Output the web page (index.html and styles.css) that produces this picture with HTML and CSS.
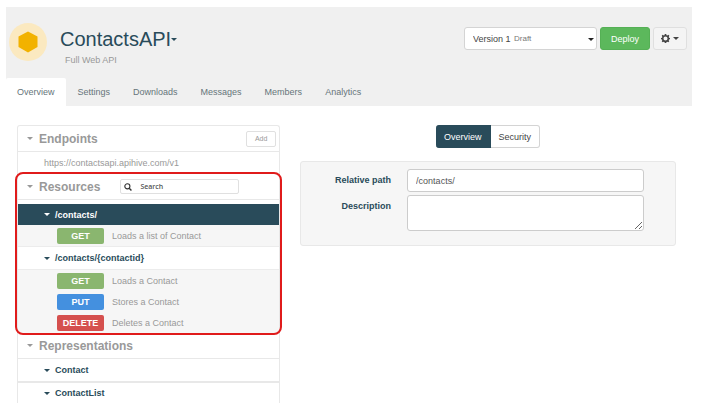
FILE: index.html
```html
<!DOCTYPE html>
<html lang="en">
<head>
<meta charset="utf-8">
<title>ContactsAPI</title>
<link rel="stylesheet" href="styles.css">
</head>
<body>
<header class="header">
  <div class="header-top">
    <svg class="logo" viewBox="0 0 38 38" aria-hidden="true">
      <circle cx="19" cy="19" r="19" fill="#fbe9c0"/>
      <path d="M19 8.500 28.500 13.500V24L19 29.500 9.500 24V13.500Z" fill="#f2b200"/>
    </svg>
    <div class="heading">
      <h1 class="title">ContactsAPI<span class="caret"></span></h1>
      <p class="subtitle">Full Web API</p>
    </div>
    <div class="actions">
      <div class="version">
        <select class="version-select" aria-label="Version"><option>Version 1</option></select>
        <span class="version-state">Draft</span>
        <span class="caret version-caret"></span>
      </div>
      <button class="btn btn-deploy" type="button">Deploy</button>
      <button class="btn btn-gear" type="button" aria-label="Options">
        <svg class="gear" viewBox="0 0 16 16" aria-hidden="true">
          <path fill="currentColor" fill-rule="evenodd" d="M6.700 0h2.600l.5 2.100 1.400.6L13.100 1.500l1.700 1.800-1 1.900.5 1.300 1.700.4v2.400l-1.800.5-.5 1.300 1 1.900-1.700 1.700-1.900-1-1.300.5L9.300 16H6.700l-.5-1.800-1.300-.5-1.900 1L1.300 13l1-1.900-.5-1.300L0 9.300V6.900l1.800-.4.5-1.300-1-1.900L3 1.500l1.900 1.200 1.300-.6ZM8 4.400A3.600 3.600 0 1 0 8 11.600 3.600 3.600 0 0 0 8 4.400Z"/>
        </svg>
        <span class="caret"></span>
      </button>
    </div>
  </div>
  <nav class="tabs">
    <a class="tab tab-active" href="#overview">Overview</a>
    <a class="tab" href="#settings">Settings</a>
    <a class="tab" href="#downloads">Downloads</a>
    <a class="tab" href="#messages">Messages</a>
    <a class="tab" href="#members">Members</a>
    <a class="tab" href="#analytics">Analytics</a>
  </nav>
</header>

<main class="content">
  <aside class="sidebar">
    <section>
      <div class="section-head">
        <span class="caret"></span>
        <h2 class="section-title">Endpoints</h2>
        <button class="btn-add" type="button">Add</button>
      </div>
      <p class="endpoint">https://contactsapi.apihive.com/v1</p>
    </section>
    <section class="resources">
      <div class="section-head">
        <span class="caret"></span>
        <h2 class="section-title">Resources</h2>
        <label class="search">
          <svg class="search-icon" viewBox="0 0 10 10" aria-hidden="true">
            <circle cx="4.200" cy="4.200" r="3.200" fill="none" stroke="#333" stroke-width="1.400"/>
            <path d="M6.500 6.500 9.300 9.300" stroke="#333" stroke-width="1.800"/>
          </svg>
          <input class="search-input" type="search" placeholder="Search" aria-label="Search resources">
        </label>
      </div>
      <a class="path path-active" href="#contacts"><span class="caret"></span>/contacts/</a>
      <div class="methods">
        <a class="method" href="#list"><span class="badge badge-get">GET</span>Loads a list of Contact</a>
      </div>
      <a class="path" href="#contact"><span class="caret"></span>/contacts/{contactid}</a>
      <div class="methods">
        <a class="method" href="#get"><span class="badge badge-get">GET</span>Loads a Contact</a>
        <a class="method" href="#put"><span class="badge badge-put">PUT</span>Stores a Contact</a>
        <a class="method" href="#delete"><span class="badge badge-delete">DELETE</span>Deletes a Contact</a>
      </div>
    </section>
    <section>
      <div class="section-head">
        <span class="caret"></span>
        <h2 class="section-title">Representations</h2>
      </div>
      <a class="path" href="#rep-contact"><span class="caret"></span>Contact</a>
      <a class="path path-ruled" href="#rep-list"><span class="caret"></span>ContactList</a>
    </section>
  </aside>

  <section class="detail">
    <div class="switch">
      <button class="switch-btn switch-on" type="button">Overview</button>
      <button class="switch-btn" type="button">Security</button>
    </div>
    <form class="panel">
      <label class="label" for="path">Relative path</label>
      <input class="field" id="path" type="text" value="/contacts/">
      <label class="label" for="description">Description</label>
      <textarea class="field field-area" id="description"></textarea>
    </form>
  </section>
</main>
</body>
</html>
```
FILE: styles.css
```css
* {
  box-sizing: border-box;
}

body {
  margin: 7px 11px 0 6px;
  background: #fff;
  color: #294b5a;
  font: 9px/12px "Liberation Sans", Arial, sans-serif;
}

h1, h2, p {
  margin: 0;
}

a {
  color: inherit;
  text-decoration: none;
}

button, input, select, textarea {
  font: inherit;
}

.caret {
  flex: none;
  display: inline-block;
  border: solid transparent;
  border-width: 3px 3px 0;
  border-top-color: currentColor;
}

/* Header */
.header {
  background: #f0f0f0;
}

.header-top {
  display: flex;
  align-items: flex-start;
  height: 71px;
  padding: 16px 5px 0 3px;
}

.logo {
  width: 38px;
  height: 38px;
}

.heading {
  flex: 1;
  padding-left: 13px;
}

.title {
  display: flex;
  align-items: center;
  font-size: 20px;
  font-weight: 400;
  line-height: 32px;
}

.subtitle {
  padding-left: 5px;
  color: #999;
  line-height: 10px;
}

.actions {
  display: flex;
  gap: 3px;
  padding-top: 4px;
}

.version {
  position: relative;
  width: 133px;
}

.version-select {
  appearance: none;
  width: 100%;
  height: 23px;
  padding: 0 8px;
  border: 1px solid #d4d4d4;
  border-radius: 3px;
  background: #fff;
  color: #444;
}

.version-state {
  position: absolute;
  top: 6px;
  left: 50px;
  color: #777;
  font-size: 8px;
  pointer-events: none;
}

.version-caret {
  position: absolute;
  top: 11px;
  right: 3px;
  color: #222;
  pointer-events: none;
}

.btn {
  height: 23px;
  padding: 0;
  border: 1px solid;
  border-radius: 3px;
}

.btn-deploy {
  width: 50px;
  border-color: #55b055;
  background: #5cb85c;
  color: #fff;
}

.btn-gear {
  display: flex;
  align-items: center;
  justify-content: center;
  gap: 3px;
  width: 34px;
  border-color: #dfdfdf;
  background: #f4f4f4;
  color: #444;
}

.gear {
  width: 9px;
  height: 9px;
}

.tabs {
  display: flex;
  gap: 1px;
}

.tab {
  padding: 8px 11px;
  color: #66757a;
}

.tab-active {
  border-radius: 2px 2px 0 0;
  background: #fff;
}

/* Page body */
.content {
  display: grid;
  grid-template-columns: 7fr 10fr;
  gap: 20px;
  padding: 19px 16px 0 11px;
}

.sidebar {
  border: 1px solid #e8e8e8;
  border-bottom: 0;
  border-radius: 3px 3px 0 0;
}

.section-head {
  display: flex;
  align-items: center;
  height: 26px;
  padding: 0 3px 0 9px;
  border-bottom: 1px solid #e8e8e8;
  color: #999;
}

.section-title {
  margin-left: 6px;
  font-size: 12px;
  line-height: 14px;
}

.btn-add {
  width: 30px;
  height: 16px;
  margin-left: auto;
  padding: 0;
  border: 1px solid #e0e0e0;
  border-radius: 2px;
  background: #fff;
  color: #999;
  font-size: 7px;
}

.endpoint {
  padding: 5px 26px;
  color: #999;
}

.resources {
  position: relative;
}

/* Highlight frame drawn around the whole section */
.resources::after {
  content: "";
  position: absolute;
  inset: -2px -3px;
  border: 2px solid #e01b1b;
  border-radius: 8px;
  pointer-events: none;
}

.resources .section-head {
  margin-bottom: 4px;
}

.search {
  display: flex;
  align-items: center;
  width: 119px;
  height: 15px;
  margin-left: 20px;
  padding-left: 3px;
  border: 1px solid #e0e0e0;
  border-radius: 2px;
}

.search-icon {
  flex: none;
  width: 8px;
  height: 8px;
}

.search-input {
  min-width: 0;
  flex: 1;
  padding: 0 8px;
  border: 0;
  background: none;
  font: 600 7px/11px "Open Sans", sans-serif;
}

.search-input::placeholder {
  color: #555;
}

.path {
  display: flex;
  align-items: center;
  gap: 5px;
  height: 22px;
  padding-left: 26px;
  font-weight: 700;
}

.path-active {
  height: 21px;
  background: #294b5a;
  color: #fff;
}

.path-ruled {
  border-top: 2px solid #e8e8e8;
}

.methods {
  background: #f6f6f6;
  border-bottom: 1px solid #ececec;
}

.path + .methods:last-child {
  border-top: 1px solid #ececec;
  border-bottom: 0;
}

.method {
  display: flex;
  align-items: center;
  gap: 8px;
  height: 21px;
  padding-left: 39px;
  color: #999;
}

.badge {
  width: 47px;
  border-radius: 2px;
  color: #fff;
  font-weight: 700;
  line-height: 16px;
  text-align: center;
}

.badge-get {
  background: #8ab66f;
}

.badge-put {
  background: #4490df;
}

.badge-delete {
  background: #d5504e;
}

/* Resource detail */
.switch {
  display: flex;
  justify-content: center;
}

.switch-btn {
  height: 23px;
  padding: 0 8px;
  border: 1px solid #d4d4d4;
  border-left: 0;
  border-radius: 0 3px 3px 0;
  background: #fff;
  color: #444;
}

.switch-on {
  border-color: #294b5a;
  border-radius: 3px 0 0 3px;
  background: #294b5a;
  color: #fff;
}

.panel {
  display: grid;
  grid-template-columns: 90px 1fr;
  gap: 3px 16px;
  margin-top: 13px;
  padding: 7px 31px 14px 0;
  border: 1px solid #e8e8e8;
  border-radius: 3px;
  background: #f6f6f6;
}

.label {
  padding-top: 5px;
  font-weight: 700;
  text-align: right;
}

.field {
  width: 100%;
  height: 23px;
  padding: 0 8px;
  border: 1px solid #ccc;
  border-radius: 3px;
  background: #fff;
  color: #555;
}

.field-area {
  height: 36px;
  padding: 4px 8px;
}
```
